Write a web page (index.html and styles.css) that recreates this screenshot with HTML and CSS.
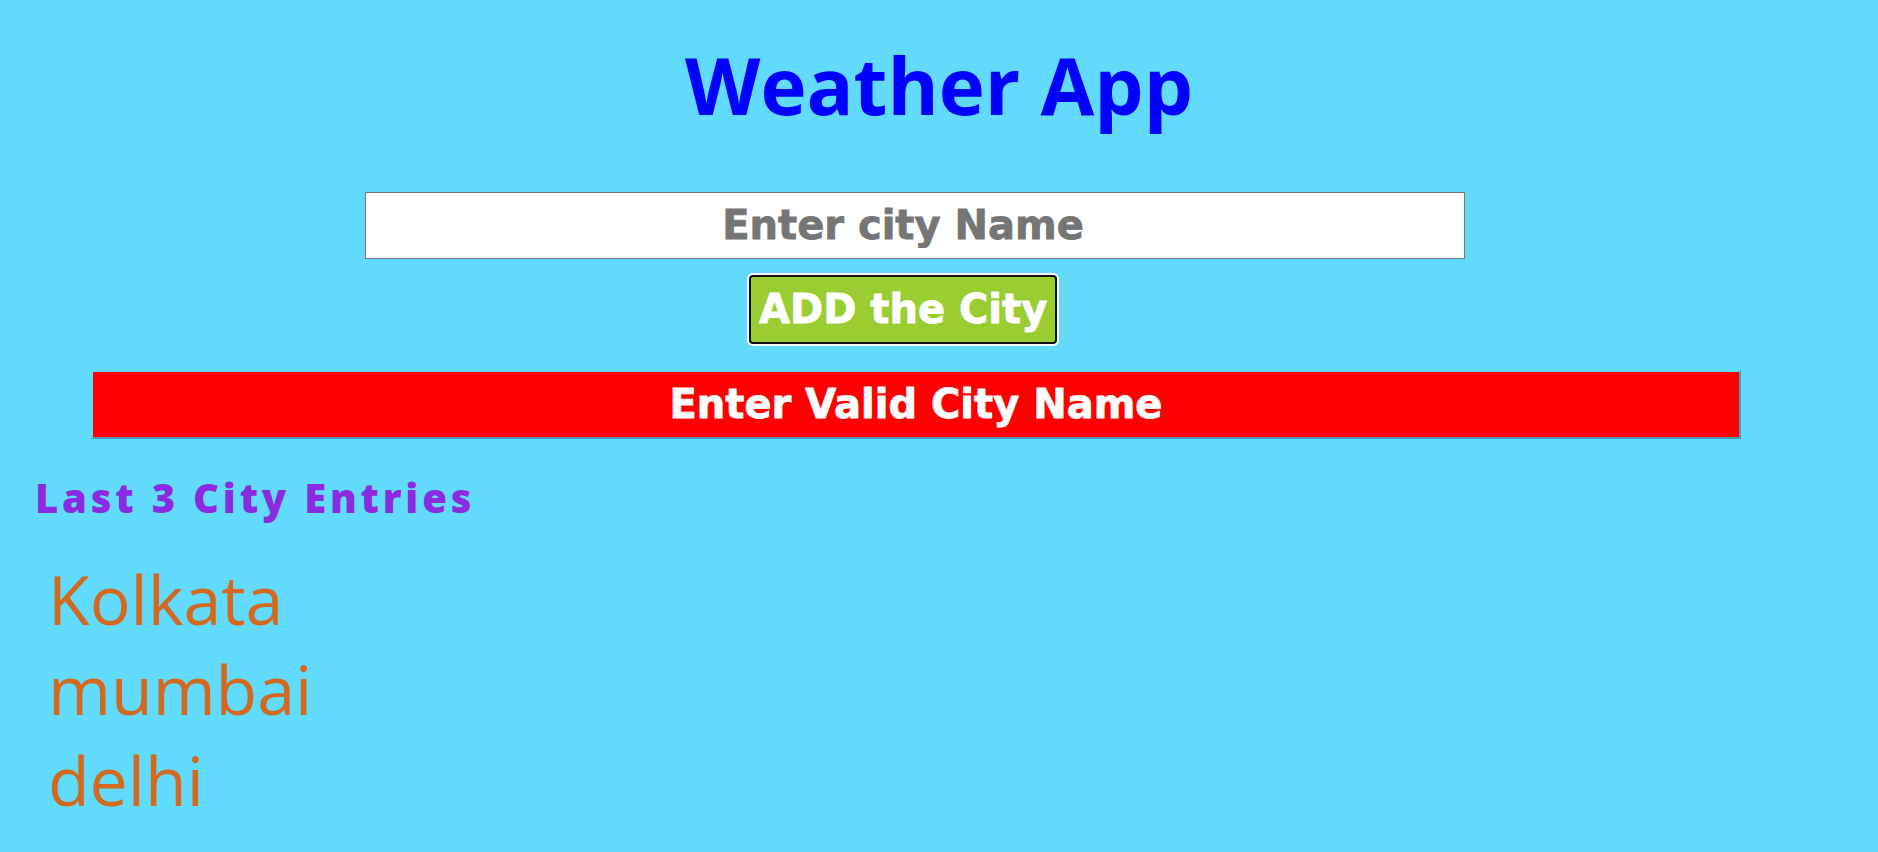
FILE: index.html
```html
<!DOCTYPE html>
<html lang="en">
<head>
<meta charset="utf-8">
<title>Weather App</title>
<link rel="stylesheet" href="styles.css">
</head>
<body>
<main class="app">
  <h1 class="title">Weather App</h1>
  <form class="search">
    <input class="city-input" type="text" placeholder="Enter city Name">
    <button class="add-btn" type="button">ADD the City</button>
  </form>
  <div class="error">Enter Valid City Name</div>
  <h2 class="history-title">Last 3 City Entries</h2>
  <ul class="history">
    <li>Kolkata</li>
    <li>mumbai</li>
    <li>delhi</li>
  </ul>
</main>
</body>
</html>
```

FILE: styles.css
```css
html, body {
  margin: 0;
  padding: 0;
}

body {
  background: #61dafb;
  min-height: 100vh;
}

.app {
  display: flex;
  flex-direction: column;
}

.title {
  margin: 0;
  padding-top: 39px;
  text-align: center;
  font-family: "Open Sans", "Noto Sans", sans-serif;
  font-weight: 700;
  font-size: 78px;
  line-height: 1.2;
  color: #0000ff;
}

.search {
  display: flex;
  flex-direction: column;
  align-items: flex-start;
  margin-top: 59px;
  padding-left: 365px;
  gap: 16px;
}

.city-input {
  box-sizing: border-box;
  width: 1100px;
  height: 67px;
  margin: 0;
  padding: 0 24px 0 0;
  border: 1px solid #767676;
  background: #fff;
  text-align: center;
  font-family: "DejaVu Sans", sans-serif;
  font-weight: 700;
  font-size: 40px;
  color: #757575;
  -webkit-text-stroke: 0.8px #757575;
  outline: none;
}

.city-input::placeholder {
  color: #757575;
  opacity: 1;
}

.add-btn {
  box-sizing: border-box;
  height: 69px;
  margin: 0 0 0 384px;
  padding: 0 8px;
  border: 2px solid #101010;
  border-radius: 4px;
  box-shadow: 0 0 0 2px #ffffff;
  background: #9acd32;
  font-family: "DejaVu Sans", sans-serif;
  font-weight: 700;
  font-size: 40px;
  color: #ffffff;
  -webkit-text-stroke: 0.8px #ffffff;
  cursor: pointer;
}

.error {
  box-sizing: border-box;
  width: 1650px;
  height: 69px;
  margin: 26px 0 0 91px;
  border: 2px solid;
  border-color: #61dafb #4a9fb8 #4a9fb8 #61dafb;
  background: #ff0000;
  display: flex;
  align-items: center;
  justify-content: center;
  font-family: "DejaVu Sans", sans-serif;
  font-weight: 700;
  font-size: 40px;
  color: #ffffff;
  -webkit-text-stroke: 0.8px #ffffff;
}

.history-title {
  margin: 33px 0 0 35px;
  font-family: "Open Sans", "Noto Sans", sans-serif;
  font-weight: 800;
  font-size: 40px;
  line-height: 1.3;
  letter-spacing: 3.8px;
  color: #8a2be2;
}

.history {
  list-style: none;
  margin: 30px 0 0 48px;
  padding: 0;
  font-family: "Open Sans", "Noto Sans", sans-serif;
  font-size: 68px;
  line-height: 90.5px;
  color: #d2691e;
}
```
